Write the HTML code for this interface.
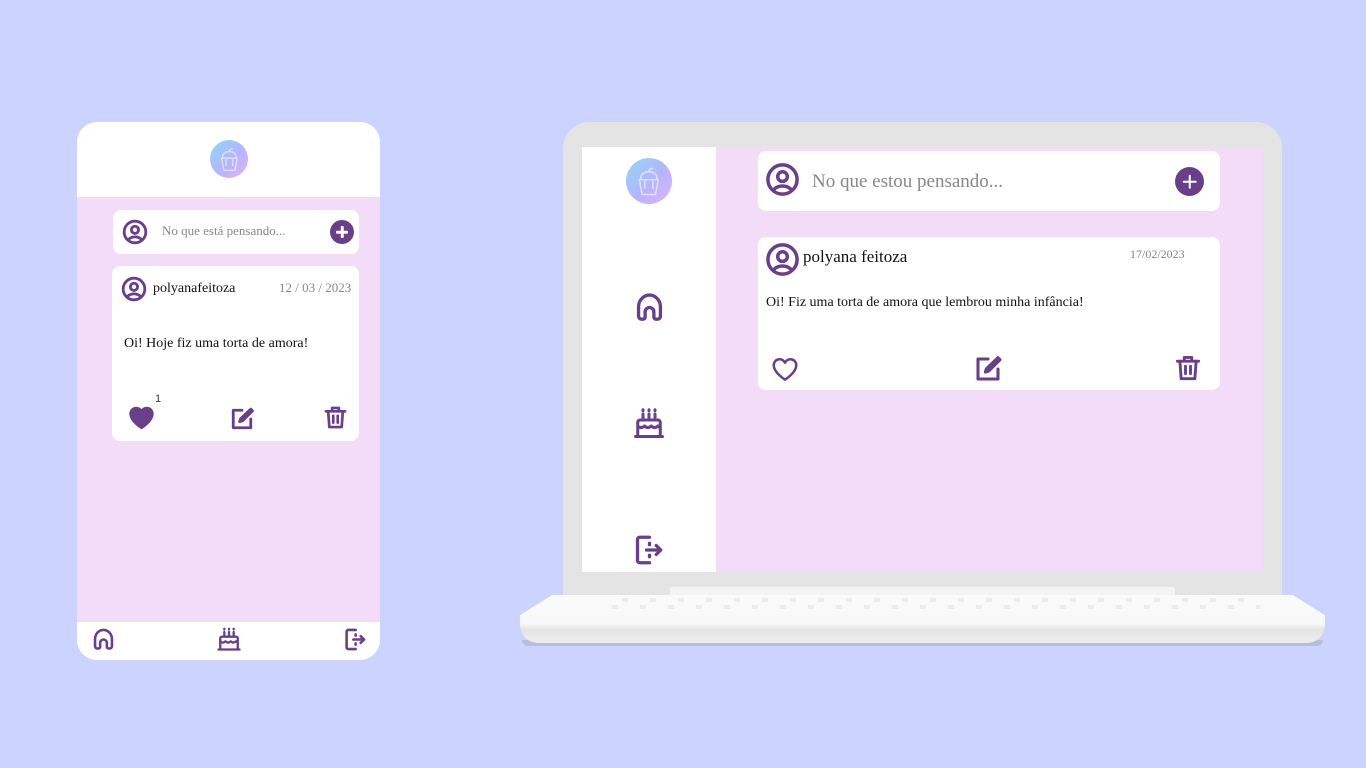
<!DOCTYPE html>
<html><head><meta charset="utf-8"><style>
*{margin:0;padding:0;box-sizing:border-box}
body{width:1366px;height:768px;background:#cbd3fe;position:relative;overflow:hidden;font-family:"Liberation Serif",serif}
.a{position:absolute}
svg.i{position:absolute;fill:none;stroke:#6a3f89;stroke-width:2.2;stroke-linecap:round;stroke-linejoin:round}
.card{position:absolute;background:#fff;border-radius:8px}
.logo{position:absolute;border-radius:50%;background:linear-gradient(135deg,#8fd8fb,#b6b4fb 55%,#e3b3f6)}
.logo svg{position:absolute;left:20%;top:15%;width:60%;height:70%;fill:none;stroke:rgba(255,255,255,.55);stroke-width:1.2}
.plus{position:absolute;border-radius:50%;background:#6a3f89}
.plus:before,.plus:after{content:"";position:absolute;background:#fff;left:50%;top:50%;transform:translate(-50%,-50%);border-radius:1px}
.plus:before{width:50%;height:2.5px}.plus:after{width:2.5px;height:50%}
</style></head><body>
<svg width="0" height="0" style="position:absolute">
<defs>
<symbol id="user" viewBox="0 0 24 24"><circle cx="12" cy="12" r="10"/><circle cx="12" cy="10" r="3.3"/><path d="M6.3 18.6a7.5 6 0 0 1 11.4 0"/></symbol>
<symbol id="home" viewBox="0 0 24 24"><path d="M4.5 18V11.5C4.5 7 8 3.5 12 3.5s7.5 3.5 7.5 8V18a2 2 0 0 1-2 2h-1a1.5 1.5 0 0 1-1.5-1.5V15a3 3 0 0 0-6 0v3.5A1.5 1.5 0 0 1 7.5 20h-1a2 2 0 0 1-2-2z"/></symbol>
<symbol id="cake" viewBox="0 0 24 24"><path d="M8 6v3M12 6v3M16 6v3M3 21h18M4.5 21v-9.5a1.5 1.5 0 0 1 1.5-1.5h12a1.5 1.5 0 0 1 1.5 1.5V21M4.5 14c1.5 1.4 3 1.4 4.5 0 1.5 1.4 3 1.4 4.5 0 1.5 1.4 3 1.4 4.5 0 .7.7 1.3 1 1.5 1"/><path d="M8 3.2v.6M12 3.2v.6M16 3.2v.6"/></symbol>
<symbol id="out" viewBox="0 0 24 24"><path d="M13 3.5H6.5a1.5 1.5 0 0 0-1.5 1.5v14a1.5 1.5 0 0 0 1.5 1.5H13M13 8.5v-1M13 16.5v-1M11 12h9.5M17.5 9l3 3-3 3"/></symbol>
<symbol id="edit" viewBox="0 0 24 24"><path d="M12 4.5H4.5v15h15V12"/><path d="M19.5 3.5l1.5 1.5-8.5 8.5-2.5.8.8-2.5z" fill="#6a3f89"/></symbol>
<symbol id="trash" viewBox="0 0 24 24"><path d="M3.5 6.5h17M9 6.5V3.5h6v3M5.5 6.5l1 14h11l1-14M10 10.5v6M14 10.5v6"/></symbol>
<symbol id="heart" viewBox="0 0 24 24"><path d="M12 20.5S3 15 3 9a4.7 4.7 0 0 1 9-2 4.7 4.7 0 0 1 9 2c0 6-9 11.5-9 11.5z"/></symbol>
</defs></svg>

<!-- PHONE -->
<div class="a" style="left:77px;top:122px;width:303px;height:538px;border-radius:20px;background:#fff;overflow:hidden">
  <div class="a" style="left:0;top:75px;width:303px;height:425px;background:#f3dcf8"></div>
</div>
<div class="logo" style="left:210px;top:140px;width:38px;height:38px"><svg viewBox="0 0 20 24"><path d="M3 11h14l-2 11H5z M7 12v6M13 12v6 M4 11c-1-4 3-6 6-6s7 2 6 6M10 5c0-2 2-3 3-2"/></svg></div>
<div class="card" style="left:113px;top:210px;width:246px;height:44px"></div>
<svg class="i" style="left:122px;top:219px;width:26px;height:26px;stroke-width:2.6"><use href="#user"/></svg>
<div class="a" style="left:162px;top:223px;font-size:13px;color:#888">No que está pensando...</div>
<div class="plus" style="left:330px;top:220px;width:24px;height:24px"></div>
<div class="card" style="left:112px;top:266px;width:247px;height:175px"></div>
<svg class="i" style="left:121px;top:276px;width:26px;height:26px;stroke-width:2.6"><use href="#user"/></svg>
<div class="a" style="left:153px;top:281px;font-size:14px;color:#111">polyanafeitoza</div>
<div class="a" style="left:279px;top:280px;font-size:13px;color:#888">12 / 03 / 2023</div>
<div class="a" style="left:124px;top:336px;font-size:14px;color:#111">Oi! Hoje fiz uma torta de amora!</div>
<svg class="i" style="left:127px;top:403px;width:29px;height:29px;fill:#6a3f89"><use href="#heart"/></svg>
<div class="a" style="left:155px;top:393px;font-size:11px;font-family:'Liberation Sans',sans-serif;color:#333">1</div>
<svg class="i" style="left:228px;top:405px;width:28px;height:28px;stroke-width:2.4"><use href="#edit"/></svg>
<svg class="i" style="left:322px;top:404px;width:27px;height:27px;stroke-width:2.4"><use href="#trash"/></svg>
<svg class="i" style="left:90px;top:626px;width:27px;height:27px;stroke-width:2.3"><use href="#home"/></svg>
<svg class="i" style="left:215px;top:625px;width:28px;height:28px;stroke-width:2"><use href="#cake"/></svg>
<svg class="i" style="left:341px;top:626px;width:27px;height:27px;stroke-width:2.3"><use href="#out"/></svg>

<!-- LAPTOP -->
<div class="a" style="left:563px;top:122px;width:719px;height:480px;border-radius:26px 26px 0 0;background:#e4e4e4"></div>
<div class="a" style="left:582px;top:147px;width:681px;height:425px;background:#f3dcf8"></div>
<div class="a" style="left:582px;top:147px;width:134px;height:425px;background:#fff"></div>
<div class="a" style="left:670px;top:587px;width:505px;height:9px;background:#f4f4f4;border-radius:2px"></div>
<div class="a" style="left:522px;top:640px;width:801px;height:6px;background:#b6bde0;border-radius:0 0 30px 30px"></div>
<div class="a" style="left:520px;top:595px;width:805px;height:48px;background:linear-gradient(#fbfbfb 0,#f8f8f8 60%,#e4e4e4 72%,#eeeeee 100%);clip-path:polygon(4% 0,96% 0,100% 42%,100% 100%,0 100%,0 42%);border-radius:0 0 18px 18px"></div>
<div class="a" style="left:600px;top:598px;width:650px;height:4px;background:repeating-linear-gradient(90deg,transparent 0 22px,#ececec 22px 28px)"></div>
<div class="a" style="left:590px;top:605px;width:670px;height:4px;background:repeating-linear-gradient(90deg,transparent 0 22px,#ececec 22px 28px)"></div>

<div class="logo" style="left:626px;top:158px;width:46px;height:46px"><svg viewBox="0 0 20 24"><path d="M3 11h14l-2 11H5z M7 12v6M13 12v6 M4 11c-1-4 3-6 6-6s7 2 6 6M10 5c0-2 2-3 3-2"/></svg></div>
<svg class="i" style="left:632px;top:290px;width:35px;height:35px;stroke-width:2.3"><use href="#home"/></svg>
<svg class="i" style="left:631px;top:405px;width:36px;height:36px;stroke-width:2"><use href="#cake"/></svg>
<svg class="i" style="left:630px;top:532px;width:36px;height:36px;stroke-width:2.2"><use href="#out"/></svg>

<div class="card" style="left:758px;top:151px;width:462px;height:60px"></div>
<svg class="i" style="left:765px;top:162px;width:35px;height:35px;stroke-width:2.4"><use href="#user"/></svg>
<div class="a" style="left:812px;top:171px;font-size:19px;color:#888">No que estou pensando...</div>
<div class="plus" style="left:1175px;top:167px;width:29px;height:29px"></div>
<div class="card" style="left:758px;top:237px;width:462px;height:153px"></div>
<svg class="i" style="left:765px;top:242px;width:35px;height:35px;stroke-width:2.4"><use href="#user"/></svg>
<div class="a" style="left:803px;top:247px;font-size:17px;color:#111">polyana feitoza</div>
<div class="a" style="left:1130px;top:247px;font-size:12px;color:#888">17/02/2023</div>
<div class="a" style="left:766px;top:295px;font-size:14px;color:#111">Oi! Fiz uma torta de amora que lembrou minha infância!</div>
<svg class="i" style="left:770px;top:354px;width:30px;height:30px;stroke-width:2"><use href="#heart"/></svg>
<svg class="i" style="left:972px;top:353px;width:32px;height:32px;stroke-width:2.3"><use href="#edit"/></svg>
<svg class="i" style="left:1173px;top:353px;width:30px;height:30px;stroke-width:2.3"><use href="#trash"/></svg>
</body></html>
